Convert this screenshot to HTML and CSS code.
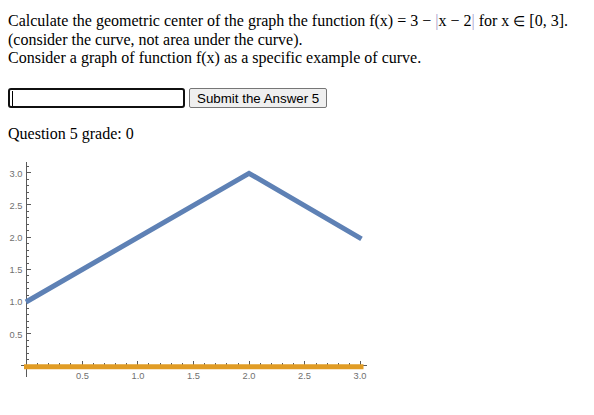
FILE: index.html
```html
<!DOCTYPE html>
<html>
<head>
<meta charset="utf-8">
<link rel="stylesheet" href="styles.css">
</head>
<body>
<div class="problem">
  <div>Calculate the geometric center of the graph the function <span class="math">f(x) = 3 − <span class="bar">|</span>x − 2<span class="bar">|</span></span> for <span class="math">x <span class="elem">∈</span> [0, 3]</span>.</div>
  <div>(consider the curve, not area under the curve).</div>
  <div>Consider a graph of function f(x) as a specific example of curve.</div>
</div>
<div class="answer-row">
  <input class="answer" type="text">
  <button class="submit" type="button">Submit the Answer 5</button>
</div>
<div class="grade">Question 5 grade: 0</div>
<svg class="chart" width="380" height="235" viewBox="0 158 380 235" xmlns="http://www.w3.org/2000/svg">
  <g stroke="#5a5a5a" stroke-width="1" fill="none" shape-rendering="crispEdges">
    <line x1="26.5" y1="162" x2="26.5" y2="377"/>
    <line x1="21" y1="365.5" x2="367" y2="365.5"/>
    <path d="M26.5 166.5h2.5 M26.5 172.5h4.5 M26.5 179.5h2.5 M26.5 185.5h2.5 M26.5 192.5h2.5 M26.5 198.5h2.5 M26.5 204.5h4.5 M26.5 211.5h2.5 M26.5 217.5h2.5 M26.5 224.5h2.5 M26.5 230.5h2.5 M26.5 237.5h4.5 M26.5 243.5h2.5 M26.5 250.5h2.5 M26.5 256.5h2.5 M26.5 263.5h2.5 M26.5 269.5h4.5 M26.5 275.5h2.5 M26.5 282.5h2.5 M26.5 288.5h2.5 M26.5 295.5h2.5 M26.5 301.5h4.5 M26.5 308.5h2.5 M26.5 314.5h2.5 M26.5 321.5h2.5 M26.5 327.5h2.5 M26.5 333.5h4.5 M26.5 340.5h2.5 M26.5 346.5h2.5 M26.5 353.5h2.5 M26.5 359.5h2.5"/>
    <path d="M37.5 365.5v-2.5 M48.5 365.5v-2.5 M59.5 365.5v-2.5 M70.5 365.5v-2.5 M82.5 365.5v-4.5 M93.5 365.5v-2.5 M104.5 365.5v-2.5 M115.5 365.5v-2.5 M126.5 365.5v-2.5 M137.5 365.5v-4.5 M148.5 365.5v-2.5 M160.5 365.5v-2.5 M171.5 365.5v-2.5 M182.5 365.5v-2.5 M193.5 365.5v-4.5 M204.5 365.5v-2.5 M215.5 365.5v-2.5 M226.5 365.5v-2.5 M238.5 365.5v-2.5 M249.5 365.5v-4.5 M260.5 365.5v-2.5 M271.5 365.5v-2.5 M282.5 365.5v-2.5 M293.5 365.5v-2.5 M304.5 365.5v-4.5 M316.5 365.5v-2.5 M327.5 365.5v-2.5 M338.5 365.5v-2.5 M349.5 365.5v-2.5 M360.5 365.5v-4.5"/>
  </g>
  <g class="ticklabel" text-anchor="end">
    <text x="22.5" y="176.5">3.0</text>
    <text x="22.5" y="208.5">2.5</text>
    <text x="22.5" y="241">2.0</text>
    <text x="22.5" y="273">1.5</text>
    <text x="22.5" y="305">1.0</text>
    <text x="22.5" y="337.5">0.5</text>
  </g>
  <g class="ticklabel" text-anchor="middle">
    <text x="82.5" y="378.5">0.5</text>
    <text x="138" y="378.5">1.0</text>
    <text x="193.5" y="378.5">1.5</text>
    <text x="249" y="378.5">2.0</text>
    <text x="304.5" y="378.5">2.5</text>
    <text x="360" y="378.5">3.0</text>
  </g>
  <line x1="26.5" y1="366.8" x2="361" y2="366.8" stroke="#e19c24" stroke-width="5" stroke-linecap="square"/>
  <polyline points="26,302 249,173.3 361.5,238.8" fill="none" stroke="#5e81b5" stroke-width="5" stroke-linejoin="miter"/>
</svg>
</body>
</html>
```
FILE: styles.css
```css
body {
  margin: 8px;
  font-family: "Liberation Serif", "Times New Roman", serif;
  font-size: 16px;
  color: #000;
  background: #fff;
}
.problem {
  padding-top: 4px;
  line-height: 18.5px;
}
.bar {
  color: #a8a0cc;
}
.elem {
  font-size: 14px;
  line-height: 0;
}
.answer-row {
  display: flex;
  align-items: center;
  gap: 4px;
  margin-top: 20.5px;
  height: 20px;
}
.answer {
  box-sizing: border-box;
  width: 177px;
  height: 20px;
  margin: 0;
  padding: 0;
  border: 2px solid #101010;
  border-radius: 3px;
  outline: none;
  background: #fff linear-gradient(#000, #000) no-repeat 2px 50% / 1px 15px;
}
.submit {
  box-sizing: border-box;
  height: 20px;
  margin: 0;
  padding: 1px 7px;
  font-family: "Liberation Sans", Arial, sans-serif;
  font-size: 13.33px;
  color: #000;
  background: #efefef;
  border: 1px solid #767676;
  border-radius: 2px;
}
.grade {
  margin-top: 16.8px;
  line-height: 18.5px;
}
.chart {
  display: block;
  margin-left: -8px;
  margin-top: 14.7px;
}
.ticklabel {
  font-family: "Liberation Sans", Arial, sans-serif;
  font-size: 9.3px;
  fill: #707070;
}
```
